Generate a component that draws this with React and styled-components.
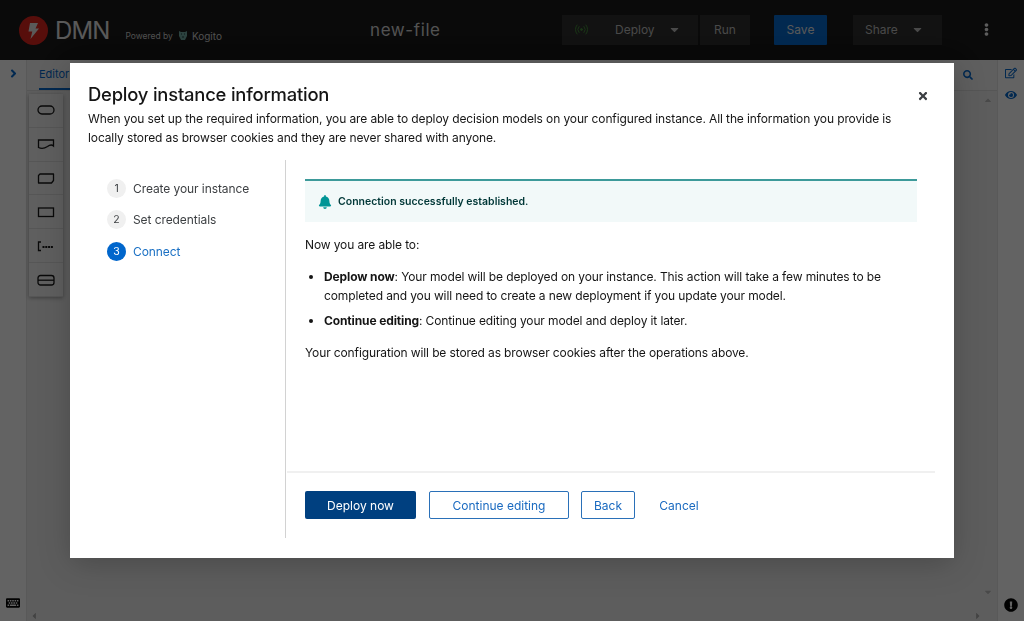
import React from "react";
import styled, { createGlobalStyle } from "styled-components";
import { FaBell, FaTimes, FaSearch, FaEye, FaEllipsisV, FaCaretDown, FaAngleRight, FaRegEdit, FaKeyboard, FaExclamationCircle, FaCaretUp, FaCaretLeft, FaCaretRight } from "react-icons/fa";

const font = `"Inter", "Liberation Sans", sans-serif`;

const Global = createGlobalStyle`
  html, body { margin: 0; padding: 0; height: 100%; }
  body { font-family: ${font}; background: #f0f0f0; overflow: hidden; }
  * { box-sizing: border-box; }
`;

const Page = styled.div`
  width: 1024px; height: 621px; display: flex; flex-direction: column; overflow: hidden;
`;
const Header = styled.header`
  height: 60px; background: #151515; display: grid; align-items: center;
  grid-template-columns: 370px 173px auto 1fr; padding-left: 19px; flex: none;
`;
const Brand = styled.div`display: flex; align-items: center; color: #fff;`;
const BrandName = styled.span`font-size: 24px; margin-left: 7px; letter-spacing: -0.9px; font-weight: 400; color: #e4e4e4;`;
const Powered = styled.span`font-size: 8.5px; margin-left: 16px; margin-top: 11px; color: #ccc; display: flex; align-items: center;`;
const Kogito = styled.span`font-size: 10px; margin-left: 5px; display: flex; align-items: center; gap: 4px;`;
const FileName = styled.div`font-size: 17px; color: #d2d2d2; letter-spacing: .6px; margin-left: -19px;`;
const Actions = styled.div`display: flex; align-items: center; font-size: 12px; margin-top: -1px;`;
const ActionBtn = styled.div`
  height: 30px; width: ${p => p.$w}px; margin-right: ${p => p.$mr || 0}px; background: ${p => p.$primary ? "#0066cc" : "#2b2b2b"};
  color: ${p => p.$primary ? "#e4e4e4" : "#bbb"}; display: flex; align-items: center; font-size: 12px;
  justify-content: ${p => p.$pl ? "flex-start" : "center"}; padding-left: ${p => p.$pl || 0}px; gap: 13.500px;
  border-radius: ${p => p.$primary ? 1 : 0}px;
`;
const Kebab = styled.div`color: #eee; font-size: 13px; margin-left: 38px; display: flex;`;

const Workspace = styled.div`flex: 1; display: flex; min-height: 0;`;
const SideBar = styled.aside`
  width: 27px; flex: none; background: #fff; display: flex; flex-direction: column; align-items: center;
  border-${p => p.$right ? "left" : "right"}: 1px solid #e4e4e4; padding-top: 2px; color: #0066cc;
`;
const SideIcon = styled.div`height: 22px; display: flex; align-items: center; font-size: 12px;`;
const SideSpacer = styled.div`flex: 1;`;
const BottomIcon = styled.div`color: #000; font-size: ${p => p.$s || 14}px; display: flex; margin-bottom: ${p => p.$mb || 9}px;`;
const Main = styled.main`flex: 1; background: #f0f0f0; display: flex; flex-direction: column; min-width: 0;`;
const TabBar = styled.div`
  height: 31px; background: #f4f4f4; display: flex; align-items: stretch; padding: 0 24px 0 12px; justify-content: space-between;
  border-bottom: 1px solid #ddd;
`;
const Tab = styled.div`font-size: 11px; color: #0066cc; border-bottom: 2px solid #0066cc; width: 40px; display: flex; align-items: center;`;
const SearchBtn = styled.div`color: #0066cc; font-size: 10px; display: flex; align-items: center;`;
const Canvas = styled.div`flex: 1; display: flex; justify-content: space-between; padding: 3px 2px 0 2px; min-height: 0;`;
const Palette = styled.div`
  width: 34px; height: 203px; background: #f4f4f4; box-shadow: 0 1px 4px rgba(0,0,0,.35);
  display: flex; flex-direction: column;
`;
const PaletteItem = styled.div`
  flex: 1; display: flex; align-items: center; justify-content: center; border-bottom: 1px solid #ddd; color: #151515;
`;
const ScrollUp = styled.div`
  align-self: stretch; display: flex; flex-direction: column; justify-content: space-between; align-items: center; color: #bbb;
  font-size: 10px; width: 14px; padding: 1px 0 14px;
`;
const Bottom = styled.div`display: flex; justify-content: space-between; color: #aaa; font-size: 10px; padding: 0 14px 0 2px; height: 10px; align-items: center;`;

const Backdrop = styled.div`
  position: fixed; inset: 0; background: rgba(3,3,3,.62); display: flex; align-items: center; justify-content: center;
`;
const Modal = styled.div`
  width: 884px; height: 495px; background: #fff; box-shadow: 0 6px 30px rgba(3,3,3,.22); display: flex; flex-direction: column;
  position: relative; color: #151515;
`;
const ModalHead = styled.div`padding: 18px 18px 0;`;
const Title = styled.h1`font-size: 18.400px; font-weight: 500; margin: 0; line-height: 26px; letter-spacing: -0.2px;`;
const Desc = styled.p`font-size: 12px; line-height: 19px; margin: 2px 0 0; max-width: 820px; letter-spacing: -0.11px;`;
const Close = styled.button`
  position: absolute; top: 27px; right: 25px; background: none; border: 0; padding: 0; color: #3c3f42; font-size: 12px; display: flex;
`;
const Wizard = styled.div`flex: 1; display: flex; margin-top: 13px; padding-bottom: 20px; min-height: 0;`;
const Nav = styled.nav`
  width: 216px; flex: none; border-right: 1px solid #d2d2d2; padding: 18.500px 0 0 37px; display: flex; flex-direction: column; gap: 12px;
`;
const Step = styled.div`display: flex; align-items: center; gap: 7px; font-size: 12px; height: 19.500px; letter-spacing: -0.08px; color: ${p => p.$active ? "#1a70c4" : "#3c3f42"};`;
const StepNum = styled.span`
  width: 19px; height: 19px; border-radius: 50%; display: flex; align-items: center; justify-content: center; font-size: 10.500px;
  background: ${p => p.$active ? "#0066cc" : "#f0f0f0"}; color: ${p => p.$active ? "#fff" : "#3c3f42"};
`;
const Content = styled.div`flex: 1; display: flex; flex-direction: column; min-width: 0; padding-left: 1px;`;
const Body = styled.div`flex: 1; padding: 19px 37px 0 18px; font-size: 12px; line-height: 19.500px; letter-spacing: -0.12px;`;
const Alert = styled.div`
  height: 43px; background: #f2f9f9; border-top: 2px solid #3d9a9a; display: flex; align-items: center; padding-left: 13px; gap: 6px;
  color: #003737; font-size: 10.500px; font-weight: 600; letter-spacing: 0;
`;
const AlertIcon = styled.span`color: #009596; font-size: 14px; display: flex;`;
const Para = styled.p`margin: 13px 0 0;`;
const List = styled.ul`margin: 12px 0 0; padding: 0 0 0 19px;`;
const Item = styled.li`margin-bottom: 5px; padding: 0;`;
const Footer = styled.div`
  height: 67px; border-top: 2px solid #f0f0f0; margin-right: 19px; padding: 18px 0 0 18px; display: flex; align-items: flex-start; flex: none;
`;
const Btn = styled.button`
  height: 28px; font-family: inherit; font-size: 12px; border-radius: 2px; width: ${p => p.$w}px; margin-right: ${p => p.$mr}px; padding: 0;
  background: ${p => p.$v === "primary" ? "#004080" : "#fff"};
  color: ${p => p.$v === "primary" ? "#fff" : "#1a6ac0"};
  border: ${p => p.$v === "secondary" ? "1px solid #2a70b8" : "none"};
`;

const Bolt = () => (
  <svg width="29" height="29" viewBox="0 0 29 29">
    <circle cx="14.500" cy="14.500" r="14.500" fill="#e0201a" />
    <path d="M11 7h8l-2.500 5.500H20L11.500 23l1.800-7.500H9.500z" fill="#e8e8e8" />
  </svg>
);
const KogitoMark = () => (
  <svg width="10" height="11" viewBox="0 0 10 11">
    <path d="M1 1l2 1h4l2-1v5l-2 4H3L1 6z" fill="#6fa8a0" />
    <path d="M3 4h1M6 4h1M4 7h2" stroke="#1d3d40" strokeWidth="1" />
  </svg>
);
const Antenna = () => (
  <svg width="13" height="11" viewBox="0 0 13 11" fill="none" stroke="#3e8635" strokeWidth="1" strokeLinecap="round">
    <circle cx="6.500" cy="5.500" r="1" fill="#3e8635" />
    <path d="M4 2.500a4.500 4.500 0 0 0 0 6M9 2.500a4.500 4.500 0 0 1 0 6M2 1a7 7 0 0 0 0 9M11 1a7 7 0 0 1 0 9" />
  </svg>
);
const Shape = ({ children }) => (
  <svg width="18" height="12" viewBox="0 0 18 12" fill="none" stroke="#151515" strokeWidth="1.300">{children}</svg>
);

export default function App() {
  return (
    <Page>
      <Global />
      <Header>
        <Brand>
          <Bolt />
          <BrandName>DMN</BrandName>
          <Powered>Powered by<Kogito><KogitoMark />Kogito</Kogito></Powered>
        </Brand>
        <FileName>new-file</FileName>
        <Actions>
          <ActionBtn $w={39}><Antenna /></ActionBtn>
          <ActionBtn $w={97} $mr={2} $pl={14}>Deploy<FaCaretDown size={13} /></ActionBtn>
          <ActionBtn $w={50} $mr={24}>Run</ActionBtn>
          <ActionBtn $w={53} $mr={26} $primary>Save</ActionBtn>
          <ActionBtn $w={89} $pl={12}>Share<FaCaretDown size={13} /></ActionBtn>
          <Kebab><FaEllipsisV /></Kebab>
        </Actions>
      </Header>
      <Workspace>
        <SideBar>
          <SideIcon><FaAngleRight size={13} /></SideIcon>
          <SideSpacer />
          <BottomIcon $mb={11}><FaKeyboard /></BottomIcon>
        </SideBar>
        <Main>
          <TabBar>
            <Tab>Editor</Tab>
            <SearchBtn><FaSearch /></SearchBtn>
          </TabBar>
          <Canvas>
            <Palette>
              <PaletteItem><Shape><rect x="1" y="2" width="16" height="8" rx="4" /></Shape></PaletteItem>
              <PaletteItem><Shape><path d="M1.500 2h15v6c-2-2-4-1-6 .5-3 2-6 2.500-9 1z" /></Shape></PaletteItem>
              <PaletteItem><Shape><path d="M3 2h13.500v6.500L14.500 11H1.500V3.500z" strokeLinejoin="round" /></Shape></PaletteItem>
              <PaletteItem><Shape><rect x="1.500" y="2" width="15" height="8.500" /></Shape></PaletteItem>
              <PaletteItem><Shape><path d="M4 2H1.500v8.500H4" /><path d="M5.500 7h11" strokeDasharray="2 .8" strokeWidth="2" /></Shape></PaletteItem>
              <PaletteItem><Shape><rect x="1" y="1.500" width="16" height="9.500" rx="2.500" /><path d="M1 6.200h16" /></Shape></PaletteItem>
            </Palette>
            <ScrollUp><FaCaretUp /><FaCaretDown /></ScrollUp>
          </Canvas>
          <Bottom><FaCaretLeft /><FaCaretRight /></Bottom>
        </Main>
        <SideBar $right>
          <SideIcon><FaRegEdit /></SideIcon>
          <SideIcon><FaEye /></SideIcon>
          <SideSpacer />
          <BottomIcon $s={14}><FaExclamationCircle /></BottomIcon>
        </SideBar>
      </Workspace>
      <Backdrop>
        <Modal>
          <Close aria-label="Close"><FaTimes /></Close>
          <ModalHead>
            <Title>Deploy instance information</Title>
            <Desc>When you set up the required information, you are able to deploy decision models on your configured instance. All the information you provide is locally stored as browser cookies and they are never shared with anyone.</Desc>
          </ModalHead>
          <Wizard>
            <Nav>
              <Step><StepNum>1</StepNum>Create your instance</Step>
              <Step><StepNum>2</StepNum>Set credentials</Step>
              <Step $active><StepNum $active>3</StepNum>Connect</Step>
            </Nav>
            <Content>
              <Body>
                <Alert><AlertIcon><FaBell /></AlertIcon>Connection successfully established.</Alert>
                <Para>Now you are able to:</Para>
                <List>
                  <Item><strong>Deplow now</strong>: Your model will be deployed on your instance. This action will take a few minutes to be completed and you will need to create a new deployment if you update your model.</Item>
                  <Item><strong>Continue editing</strong>: Continue editing your model and deploy it later.</Item>
                </List>
                <Para>Your configuration will be stored as browser cookies after the operations above.</Para>
              </Body>
              <Footer>
                <Btn $v="primary" $w={111} $mr={13}>Deploy now</Btn>
                <Btn $v="secondary" $w={140} $mr={12}>Continue editing</Btn>
                <Btn $v="secondary" $w={54} $mr={12}>Back</Btn>
                <Btn $v="link" $w={64} $mr={0}>Cancel</Btn>
              </Footer>
            </Content>
          </Wizard>
        </Modal>
      </Backdrop>
    </Page>
  );
}
